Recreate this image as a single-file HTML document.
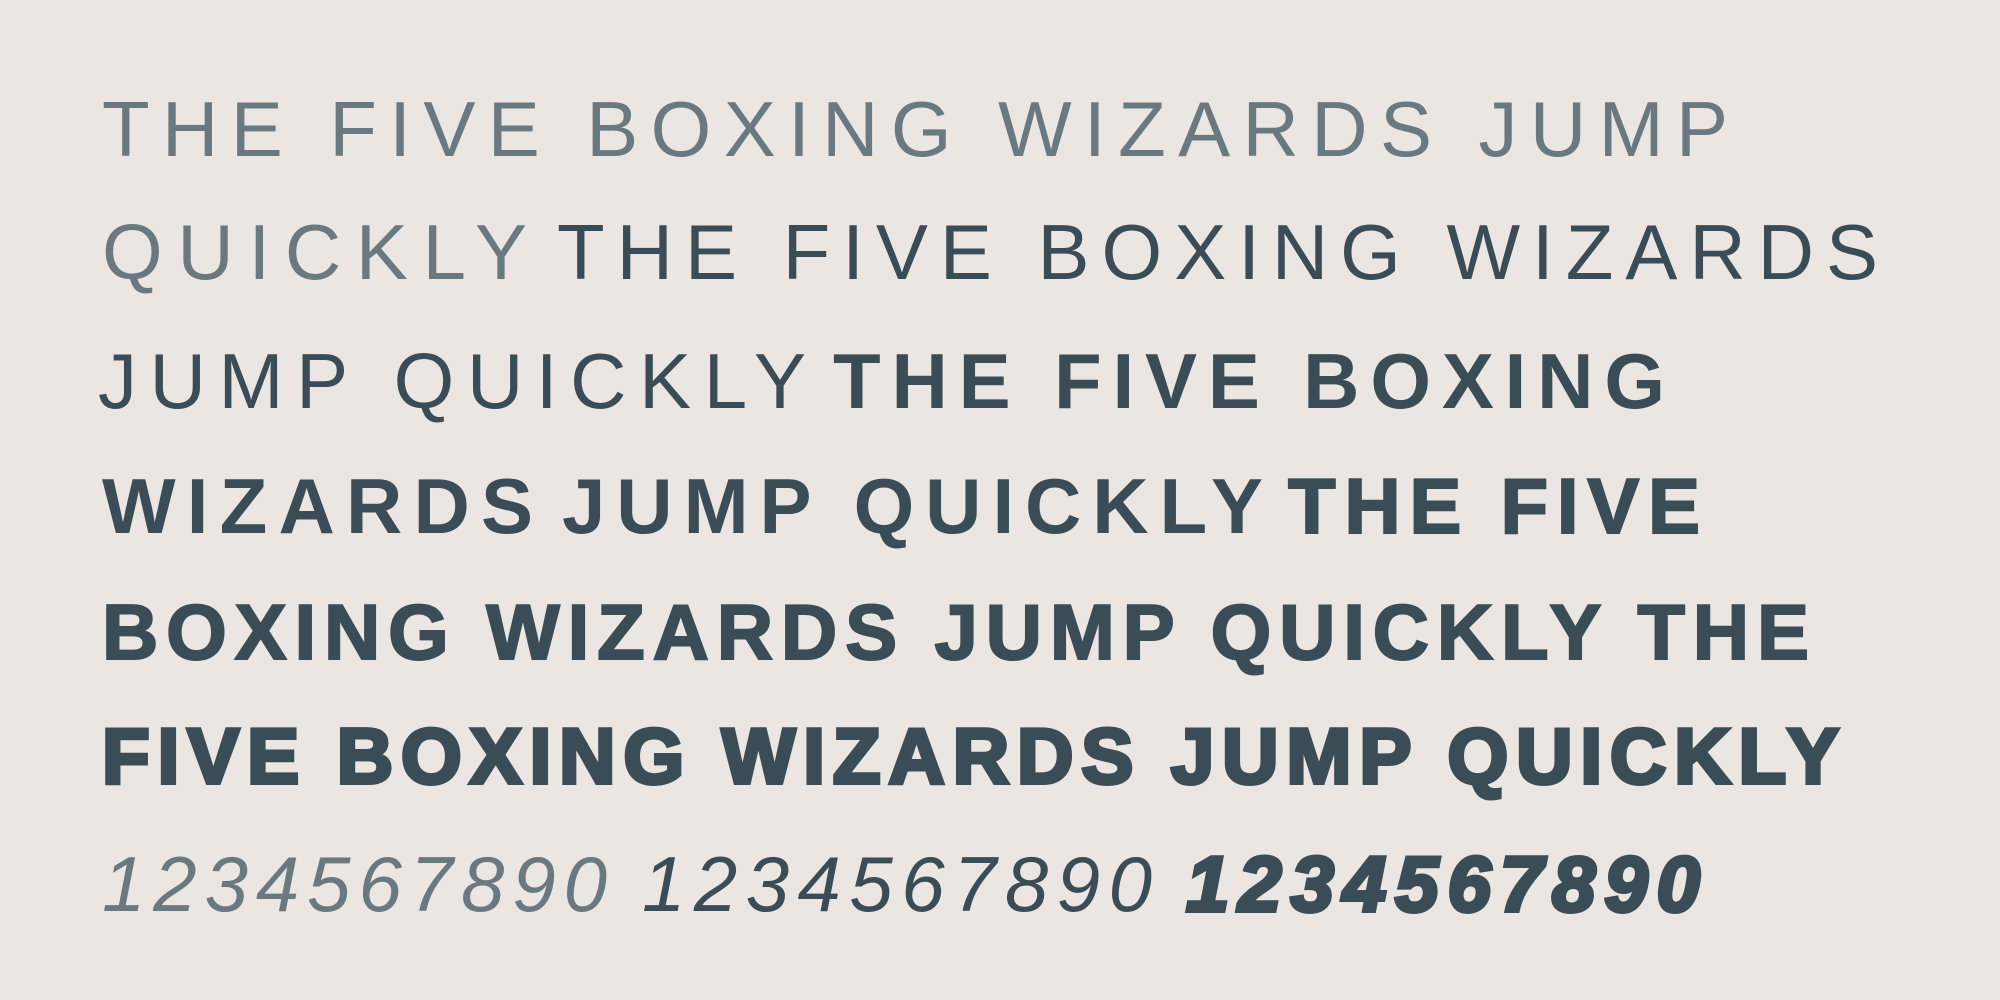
<!DOCTYPE html>
<html><head><meta charset="utf-8"><style>
html,body{margin:0;padding:0;background:#ebe6e2;}
svg{display:block}
text{font-family:"Liberation Sans",sans-serif;font-size:78px;fill:#3a4d57;}
.t{font-weight:400;fill:#6a7880;}
.l{font-weight:400;}
.m{font-weight:700;}
.b{font-weight:700;stroke:#3a4d57;stroke-width:2;}
.k{font-weight:700;stroke:#3a4d57;stroke-width:4;}
.i{font-style:italic;}
</style></head><body>
<svg width="2000" height="1000" viewBox="0 0 2000 1000" xmlns="http://www.w3.org/2000/svg">
<text class="t" x="102" y="156" textLength="1626" lengthAdjust="spacing">THE FIVE BOXING WIZARDS JUMP</text>
<text class="t" x="102" y="279" textLength="425" lengthAdjust="spacing">QUICKLY</text>
<text class="l" x="557" y="279" textLength="1321" lengthAdjust="spacing">THE FIVE BOXING WIZARDS</text>
<text class="l" x="98" y="408" textLength="708" lengthAdjust="spacing">JUMP QUICKLY</text>
<text class="m" x="833" y="408" textLength="832" lengthAdjust="spacing">THE FIVE BOXING</text>
<text class="m" x="102" y="533" textLength="431" lengthAdjust="spacing">WIZARDS</text>
<text class="m" x="562" y="533" textLength="701" lengthAdjust="spacing">JUMP QUICKLY</text>
<text class="b" x="1288" y="533" textLength="412" lengthAdjust="spacing">THE FIVE</text>
<text class="b" x="102" y="659" textLength="1707" lengthAdjust="spacing">BOXING WIZARDS JUMP QUICKLY THE</text>
<text class="k" x="102" y="783" textLength="1737" lengthAdjust="spacing">FIVE BOXING WIZARDS JUMP QUICKLY</text>
<text class="t i" x="102" y="911" textLength="505" lengthAdjust="spacing">1234567890</text>
<text class="l i" x="642" y="911" textLength="510" lengthAdjust="spacing">1234567890</text>
<text class="k i" x="1186" y="911" textLength="514" lengthAdjust="spacing">1234567890</text>
</svg>
</body></html>
